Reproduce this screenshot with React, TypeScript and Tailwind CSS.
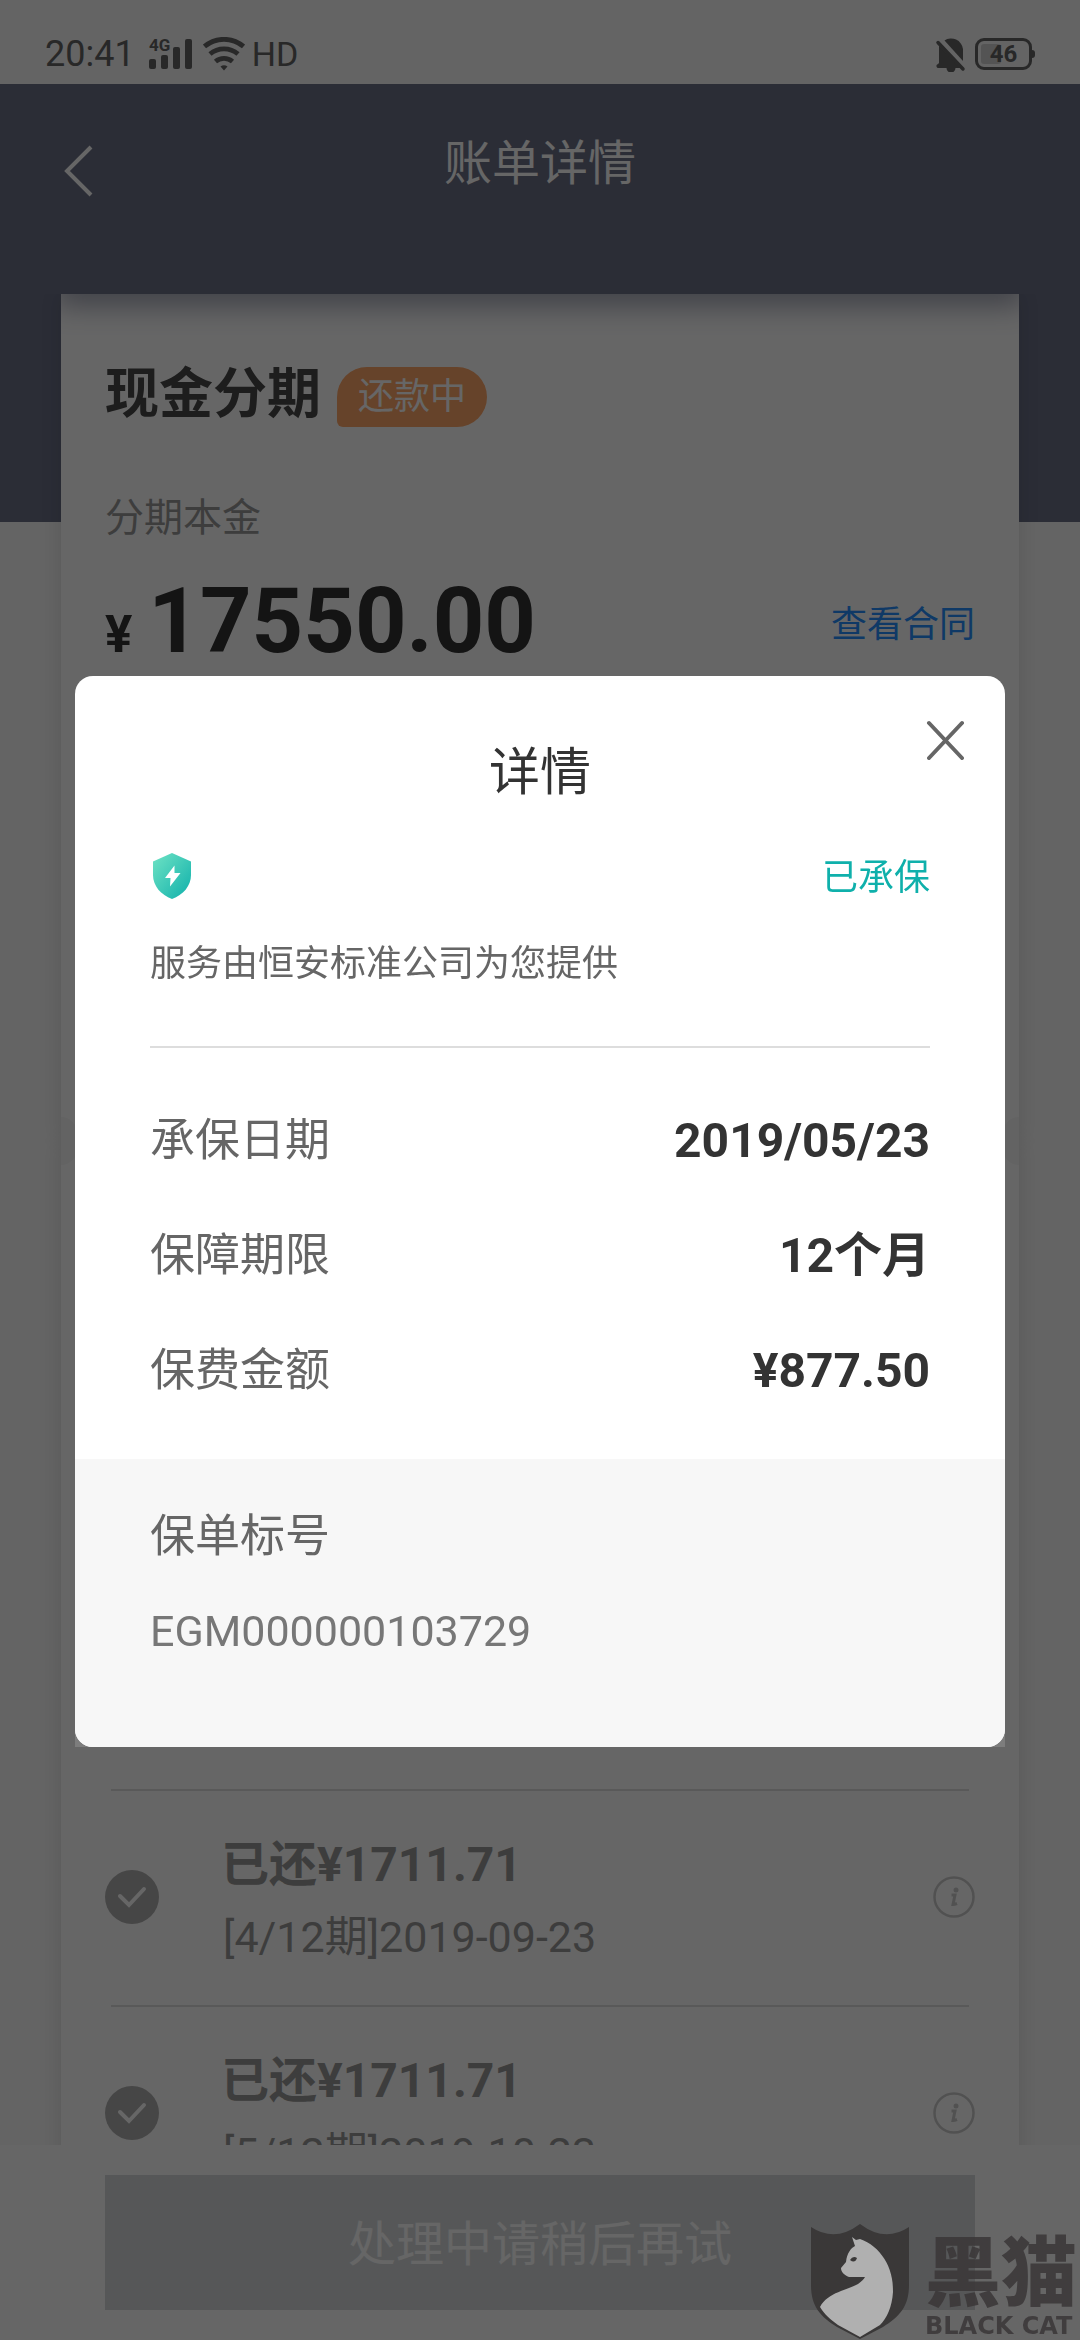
import { useState } from "react";

const FONT =
  "font-['Roboto','Noto_Sans_CJK_SC',sans-serif] [font-synthesis:none]";

const policyRows = [
  { label: "承保日期", value: "2019/05/23" },
  { label: "保障期限", value: "12个月" },
  { label: "保费金额", value: "¥877.50" },
];

const periods = [
  { title: "已还¥1711.71", detail: "[4/12期]2019-09-23" },
  { title: "已还¥1711.71", detail: "[5/12期]2019-10-23" },
];

function StatusBar() {
  return (
    <div className="flex h-[84px] shrink-0 items-center bg-[#fafafa] pr-[45px] pl-[45px] pt-6 text-[#646464]">
      <span className="text-[36px] leading-9">20:41</span>
      <svg
        className="ml-[14px] h-8 w-11 overflow-visible"
        viewBox="0 0 44 32"
        fill="currentColor"
      >
        <text x="0" y="13" fontSize="17" fontWeight="700" fontFamily="Roboto">
          4G
        </text>
        <rect x="0" y="21" width="7" height="10" rx="2" />
        <rect x="12" y="17" width="7" height="14" rx="2" />
        <rect x="24" y="9" width="7" height="22" rx="2" />
        <rect x="36" y="1" width="7" height="30" rx="2" />
      </svg>
      <svg
        className="ml-[10px] h-[34px] w-[42px]"
        viewBox="0 0 42 34"
        fill="none"
        stroke="currentColor"
        strokeWidth="4.8"
      >
        <path d="M1.500 9.500a30 30 0 0 1 39 0" />
        <path d="M7 17a21.500 21.500 0 0 1 28 0" />
        <path d="M12.500 24.500a13 13 0 0 1 17 0" />
        <path d="M17.500 29.500q3.500-2.600 7 0L21 33.500z" fill="currentColor" stroke="none" />
      </svg>
      <span className="ml-[7px] text-[34px] leading-9">HD</span>
      <div className="ml-auto flex items-center gap-2">
        <svg className="h-9 w-8" viewBox="0 0 32 36" fill="currentColor">
          <path d="M9.500 4.500A12 12 0 0 1 28 13v12z" />
          <path d="M4 9.500 26 32h-5.500a4.500 4.500 0 0 1-9 0H4a2 2 0 0 1-1-4l1-1z" />
          <path
            d="M3 6.500 28 33"
            fill="none"
            stroke="currentColor"
            strokeWidth="3.500"
            strokeLinecap="round"
          />
        </svg>
        <div className="flex items-center">
          <div className="relative flex h-8 w-[57px] items-center justify-center rounded-[9px] border-[3px] border-current">
            <span className="absolute top-[3px] left-[3px] h-5 w-5 rounded-[3px] bg-[#d2d2d2]" />
            <span className="relative text-[24px] leading-6 font-bold">46</span>
          </div>
          <span className="h-2 w-[3px] rounded-r-full bg-current" />
        </div>
      </div>
    </div>
  );
}

function TopBar() {
  return (
    <header className="relative flex h-[210px] shrink-0 items-start justify-center bg-[#6b7087] pt-[45px] text-white">
      <button
        type="button"
        aria-label="返回"
        className="absolute top-[60px] left-[63px]"
      >
        <svg
          className="h-[54px] w-8"
          viewBox="0 0 32 54"
          fill="none"
          stroke="currentColor"
          strokeWidth="4"
        >
          <path d="M28 3 4 27l24 24" />
        </svg>
      </button>
      <h1 className="text-[48px] leading-[70px]">账单详情</h1>
    </header>
  );
}

function LoanCard() {
  return (
    <section className="relative mx-[61px] -mt-[228px] min-h-[847px] bg-white px-11 pt-[68px] shadow-[0_0_20px_rgba(0,0,0,0.12)]">
      <div className="absolute inset-x-0 top-0 h-12 overflow-hidden">
        <div className="-mt-5 h-5 shadow-[0_4px_30px_6px_rgba(75,80,110,0.6)]" />
      </div>
      <div className="flex items-center">
        <h2 className="text-[54px] leading-[66px] font-bold text-[#4a4a4a]">
          现金分期
        </h2>
        <span className="mt-1 ml-4 flex h-[60px] items-center rounded-[30px] rounded-bl-[6px] bg-[#ffa769] px-[21px] text-[36px] text-white">
          还款中
        </span>
      </div>
      <p className="mt-[60px] text-[39px] leading-[60px] text-[#999]">
        分期本金
      </p>
      <div className="mt-[29px] flex items-center justify-between">
        <p className="flex items-baseline gap-4 leading-[90px] font-bold text-[#333]">
          <span className="text-[51px]">¥</span>
          <span className="text-[90px]">17550.00</span>
        </p>
        <a href="#contract" className="pb-2 text-[36px] text-[#2790ff]">
          查看合同
        </a>
      </div>
    </section>
  );
}

function PeriodRow({ title, detail }: { title: string; detail: string }) {
  return (
    <div className="flex h-[216px] items-center">
      <svg className="h-[54px] w-[54px] shrink-0" viewBox="0 0 54 54">
        <circle cx="27" cy="27" r="27" fill="#afafaf" />
        <path
          d="M15 26l9 9 15-16"
          fill="none"
          stroke="#fff"
          strokeWidth="4"
          strokeLinecap="round"
        />
      </svg>
      <div className="ml-[62px] flex-1 pt-2 text-[#999]">
        <p className="text-[48px] leading-[72px] font-bold">{title}</p>
        <p className="pl-[2px] text-[43px] leading-[72px]">{detail}</p>
      </div>
      <button type="button" aria-label="还款说明">
        <svg className="h-[42px] w-[42px]" viewBox="0 0 42 42">
          <circle
            cx="21"
            cy="21"
            r="19.500"
            fill="none"
            stroke="#cbcbcb"
            strokeWidth="2.500"
          />
          <circle cx="23" cy="14" r="2.500" fill="#cbcbcb" />
          <path
            d="M18.500 19h3.500l-2 9.500q1.500 0 4-1"
            fill="none"
            stroke="#cbcbcb"
            strokeWidth="3"
          />
        </svg>
      </button>
    </div>
  );
}

function PlanCard() {
  return (
    <section className="relative mx-[61px] min-h-[1100px] bg-white px-11 pt-[648px] shadow-[0_0_20px_rgba(0,0,0,0.12)]">
      <span className="absolute -top-6 left-0 h-12 w-4 rounded-r-full bg-[#f7f7f7]" />
      <span className="absolute -top-6 right-0 h-12 w-4 rounded-l-full bg-[#f7f7f7]" />
      <ul>
        {periods.map((p) => (
          <li key={p.detail}>
            <div className="mx-[6px] -mb-[2px] h-[2px] bg-[#dedede]" />
            <PeriodRow title={p.title} detail={p.detail} />
          </li>
        ))}
      </ul>
    </section>
  );
}

function ShieldIcon() {
  return (
    <svg className="h-[46px] w-[38px]" viewBox="0 0 38 46">
      <defs>
        <linearGradient id="shield" x1="0" y1="0" x2="1" y2="1">
          <stop offset="0" stopColor="#6fe3c4" />
          <stop offset="1" stopColor="#0fb0ab" />
        </linearGradient>
      </defs>
      <path
        d="M19 0 38 8.500V22c0 11-8 20-19 24C8 42 0 33 0 22V8.500z"
        fill="url(#shield)"
      />
      <path d="M21.500 12.500 12 25h5.500L17 33.500 27.500 20H21.500z" fill="#fff" />
    </svg>
  );
}

function DetailDialog({ onClose }: { onClose: () => void }) {
  return (
    <div className="fixed inset-0 bg-black/60 px-[75px] pt-[676px]">
      <div className="rounded-t-[18px] bg-white/15">
        <div
          role="dialog"
          aria-label="详情"
          className="relative overflow-hidden rounded-[18px] bg-white"
        >
          <button
            type="button"
            aria-label="关闭"
            onClick={onClose}
            className="absolute top-11 right-10"
          >
            <svg
              className="h-10 w-10"
              viewBox="0 0 40 40"
              fill="none"
              stroke="#666"
              strokeWidth="4"
              strokeLinecap="round"
            >
              <path d="M4 3l33 35M37 3 4 38" />
            </svg>
          </button>
          <div className="px-[75px] pt-[62px]">
            <h2 className="text-center text-[51px] leading-[70px] text-[#333]">
              详情
            </h2>
            <div className="mt-[43px] flex items-center justify-between">
              <span className="pb-1 pl-[3px]">
                <ShieldIcon />
              </span>
              <span className="text-[36px] leading-[54px] text-[#0fb0ab]">
                已承保
              </span>
            </div>
            <p className="mt-8 border-b-2 border-[#ddd] pb-[55px] text-[36px] leading-[54px] text-[#666]">
              服务由恒安标准公司为您提供
            </p>
            <dl className="pt-[35px] pb-[31px]">
              {policyRows.map((row) => (
                <div
                  key={row.label}
                  className="flex h-[115px] items-center justify-between"
                >
                  <dt className="text-[45px] text-[#666]">{row.label}</dt>
                  <dd className="text-[48px] font-bold text-[#333]">
                    {row.value}
                  </dd>
                </div>
              ))}
            </dl>
          </div>
          <div className="h-[288px] bg-[#f7f7f7] px-[75px] pt-[46px]">
            <p className="text-[45px] leading-[64px] text-[#666]">保单标号</p>
            <p className="mt-[30px] text-[43px] leading-[64px] text-[#777]">
              EGM000000103729
            </p>
          </div>
        </div>
      </div>
    </div>
  );
}

function Watermark() {
  return (
    <div className="pointer-events-none fixed right-0 bottom-0 flex items-end gap-4 pr-[3px] text-[#3a3637]/85">
      <svg className="h-[116px] w-[98px]" viewBox="0 0 98 116">
        <path
          d="M0 3q24 16 49-3 25 19 49 3v58c0 22-10 32-26 42l-23 12-23-12C10 93 0 83 0 61z"
          fill="#3a3838"
        />
        <path
          d="M41 13l4 3 4-1c20 7 34 28 33 53-1 15-6 26-13 33l-20 12-22-12C20 96 13 90 9 83c8-15 28-17 38-23 3-2 6-5 7-7H38c-5-2-8-5-8-9l5-6c1-9 5-14 9-16z"
          fill="#b0b0b0"
        />
        <path d="M39 36q3-5 7-2-2 6-7 2z" fill="#3a3838" />
      </svg>
      <div className="flex flex-col">
        <span className="text-[76px] leading-[76px] font-black">黑猫</span>
        <span className="font-['DejaVu_Sans',sans-serif] text-[24px] leading-7 font-bold">
          BLACK CAT
        </span>
      </div>
    </div>
  );
}

export default function App() {
  const [open, setOpen] = useState(true);

  return (
    <div className={`flex h-screen flex-col overflow-hidden bg-[#fafafa] ${FONT}`}>
      <StatusBar />
      <TopBar />
      <main className="flex-1 overflow-hidden">
        <div className="h-[228px] bg-[#6b7087]" />
        <LoanCard />
        <PlanCard />
      </main>
      <footer className="shrink-0 bg-white px-[105px] py-[30px]">
        <button
          type="button"
          disabled
          className="h-[135px] w-full bg-[#d7dadd] pt-1 text-[48px] text-white"
        >
          处理中请稍后再试
        </button>
      </footer>
      {open && <DetailDialog onClose={() => setOpen(false)} />}
      <Watermark />
    </div>
  );
}
